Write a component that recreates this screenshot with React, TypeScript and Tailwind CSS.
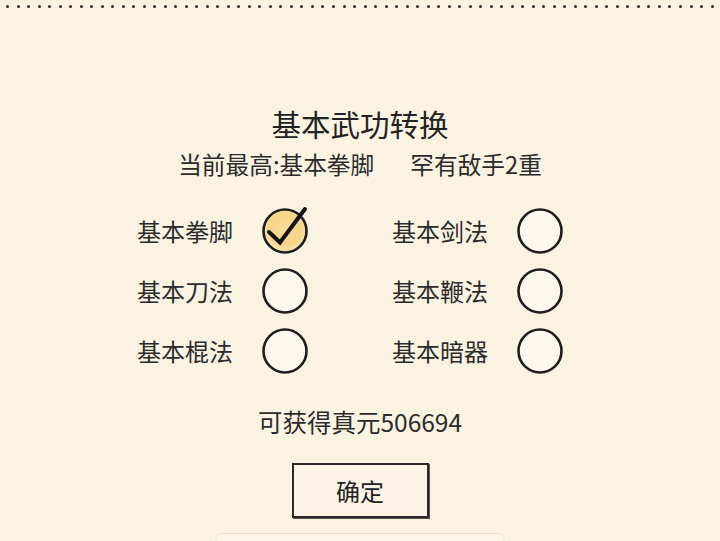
import React from "react";

const FONT = { fontFamily: '"Noto Sans CJK SC", "Noto Sans", sans-serif' };

const options = [
  { left: "基本拳脚", right: "基本剑法", leftChecked: true },
  { left: "基本刀法", right: "基本鞭法", leftChecked: false },
  { left: "基本棍法", right: "基本暗器", leftChecked: false },
];

function Ring({ checked }: { checked?: boolean }) {
  return (
    <svg width="52" height="52" viewBox="0 0 52 52" className="overflow-visible">
      <defs>
        <radialGradient id="fillWarm" cx="50%" cy="45%" r="55%">
          <stop offset="0%" stopColor="#fbdc95" />
          <stop offset="70%" stopColor="#f7d58a" />
          <stop offset="100%" stopColor="#fae7bf" />
        </radialGradient>
      </defs>
      <circle
        cx="26"
        cy="26"
        r="21.5"
        fill={checked ? "url(#fillWarm)" : "#fdf8ee"}
        stroke="#1e1e1e"
        strokeWidth="2.6"
      />
      {checked && (
        <path
          d="M10 27 L21 37.5 L46 4"
          fill="none"
          stroke="#141414"
          strokeWidth="4"
          strokeLinecap="round"
          strokeLinejoin="miter"
        />
      )}
    </svg>
  );
}

function Option({ label, checked }: { label: string; checked?: boolean }) {
  return (
    <div className="flex items-center">
      <span className="w-[96px] text-[24px] leading-none text-[#2b2b2b]">{label}</span>
      <div className="ml-[26px]">
        <Ring checked={checked} />
      </div>
    </div>
  );
}

export default function App() {
  return (
    <div
      className="relative flex h-[541px] w-[720px] flex-col items-center overflow-hidden bg-[#fbf3e2]"
      style={FONT}
    >
      {/* dotted edge */}
      <div className="mt-[5px] flex w-[708px] shrink-0 justify-between">
        {Array.from({ length: 68 }).map((_, i) => (
          <span key={i} className="h-[3px] w-[3px] rounded-full bg-[#2e2e2e]" />
        ))}
      </div>

      {/* title */}
      <div className="mt-[96px] flex h-[40px] shrink-0 items-center text-[29.5px] leading-none text-[#222]">
        基本武功转换
      </div>

      {/* current */}
      <div className="mt-[6px] flex h-[30px] shrink-0 items-center gap-[36px] text-[23.7px] leading-none text-[#2b2b2b]">
        <span>当前最高:基本拳脚</span>
        <span>罕有敌手2重</span>
      </div>

      {/* options */}
      <div className="mt-[21px] flex w-full shrink-0 flex-col pl-[137px]">
        {options.map((row) => (
          <div key={row.left} className="flex h-[60px] items-center gap-[81px]">
            <Option label={row.left} checked={row.leftChecked} />
            <Option label={row.right} />
          </div>
        ))}
      </div>

      {/* reward */}
      <div className="mt-[26px] flex h-[30px] shrink-0 items-center text-[24.5px] leading-none text-[#2b2b2b]">
        可获得真元506694
      </div>

      {/* confirm */}
      <button className="mt-[26px] flex h-[55px] w-[137px] shrink-0 items-center justify-center border-2 border-[#2a2a2a] bg-[#fcf5e7] text-[24px] leading-none text-[#222] shadow-[1px_1px_0_#555]">
        确定
      </button>

      {/* bottom tray */}
      <div className="mt-[15px] h-[20px] w-[290px] shrink-0 rounded-[8px] border border-[#ece2cc] bg-[#fcf6e8]" />
    </div>
  );
}
